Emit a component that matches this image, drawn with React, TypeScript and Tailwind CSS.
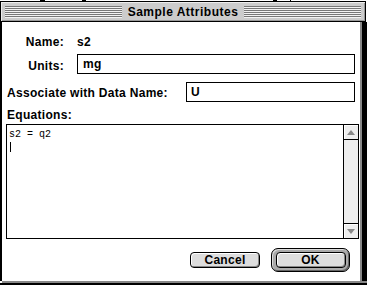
const STRIPES = [0, 1, 2, 3, 4, 5];

function Stripes() {
  return (
    <div className="flex-1 flex flex-col">
      {STRIPES.map((i) => (
        <div key={i} className="h-[2px] flex flex-col">
          <div className="h-px bg-[#777777]" />
          <div className="h-px bg-[#f2f2f2]" />
        </div>
      ))}
    </div>
  );
}

function MacButton({ label }: { label: string }) {
  return (
    <div className="w-[70px] h-[16px] rounded-[4px] border border-black bg-[#dddddd] shadow-[inset_1px_1px_0_#ffffff,inset_-1px_-1px_0_#888888] flex items-center justify-center text-[12px] font-bold leading-none text-black">
      {label}
    </div>
  );
}

export default function App() {
  return (
    <div className="w-[367px] h-[286px] bg-white flex flex-col overflow-hidden font-['Liberation_Sans',Arial,sans-serif] text-black">
      {/* bits of windows behind */}
      <div className="h-px flex">
        <div className="ml-[40px] w-[5px] bg-black" />
        <div className="ml-[37px] w-[4px] bg-black" />
        <div className="ml-[187px] w-[4px] bg-black" />
        <div className="ml-[13px] w-px bg-black" />
      </div>

      {/* title bar */}
      <div className="w-[366px] h-[21px] border border-black bg-[#cccccc] shadow-[inset_1px_1px_0_#eeeeee,inset_-1px_-1px_0_#999999] flex items-center px-[4px]">
        <Stripes />
        <div className="w-[122px] text-center text-[12px] font-bold leading-none tracking-[0.5px]">
          Sample Attributes
        </div>
        <Stripes />
      </div>

      {/* body */}
      <div className="h-[259px] flex">
        <div className="w-[2px] bg-black" />
        <div className="flex-1 bg-white flex flex-col text-[12px] font-bold tracking-[0.3px]">
          <div className="mt-[10px] h-[20px] flex items-center">
            <div className="w-[62px] text-right">Name:</div>
            <div className="ml-[13px]">s2</div>
          </div>
          <div className="mt-[2px] h-[20px] flex items-center">
            <div className="w-[62px] text-right pt-[3px]">Units:</div>
            <div className="ml-[13px] w-[278px] h-[20px] border border-black flex items-center pl-[5px]">mg</div>
          </div>
          <div className="mt-[8px] h-[20px] flex items-center">
            <div className="ml-[5px] w-[179px] pt-[1px]">Associate with Data Name:</div>
            <div className="w-[169px] h-[20px] border border-black flex items-center pl-[4px]">U</div>
          </div>
          <div className="mt-[6px] h-[14px] ml-[5px] flex items-center">Equations:</div>

          <div className="mt-[2px] ml-[4px] w-[353px] h-[115px] border border-black flex">
            <div className="flex-1 flex flex-col pl-[2px] pt-[4px] font-['Liberation_Mono',monospace] font-normal text-[10px] leading-[11px] tracking-normal">
              <div>s2 = q2</div>
              <div className="ml-[1px] mt-[2px] w-px h-[10px] bg-black" />
            </div>
            <div className="w-[15px] border-l border-black bg-[#eeeeee] flex flex-col justify-between">
              <div className="h-[15px] border-b border-black bg-[#eeeeee] shadow-[inset_1px_1px_0_#ffffff] flex items-center justify-center">
                <svg width="8" height="5" viewBox="0 0 8 5">
                  <polygon points="4,0 8,5 0,5" fill="#888888" />
                </svg>
              </div>
              <div className="h-[15px] border-t border-black bg-[#eeeeee] shadow-[inset_1px_1px_0_#ffffff] flex items-center justify-center">
                <svg width="8" height="5" viewBox="0 0 8 5">
                  <polygon points="0,0 8,0 4,5" fill="#888888" />
                </svg>
              </div>
            </div>
          </div>

          <div className="mt-[9px] flex items-center">
            <div className="ml-[188px]">
              <MacButton label="Cancel" />
            </div>
            <div className="ml-[11px] w-[79px] h-[24px] rounded-[7px] border border-black bg-[#aaaaaa] shadow-[inset_1px_1px_0_#dddddd,inset_-1px_-1px_0_#666666] flex items-center justify-center">
              <MacButton label="OK" />
            </div>
          </div>
        </div>
        <div className="w-[2px] bg-[#888888]" />
        <div className="w-[5px] bg-black" />
      </div>
      <div className="h-[2px] ml-[2px] bg-[#888888]" />
      <div className="h-[2px] bg-black" />
      <div className="h-px bg-white" />
    </div>
  );
}
